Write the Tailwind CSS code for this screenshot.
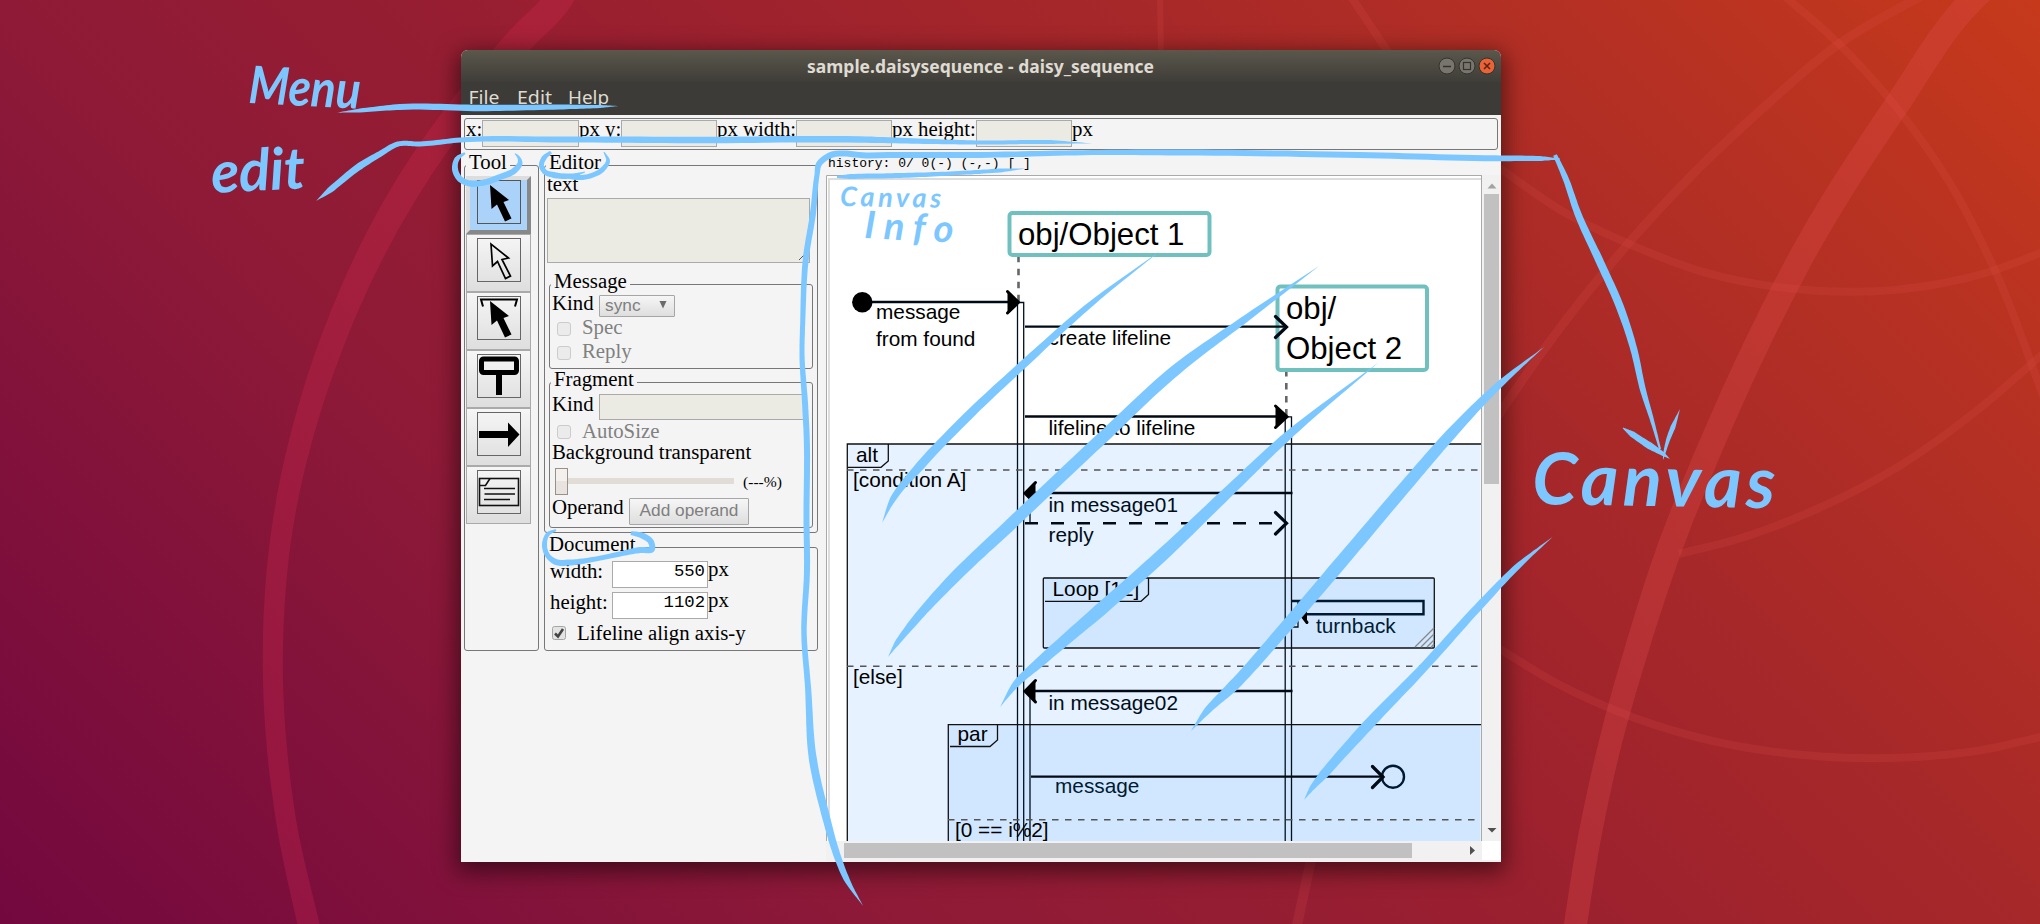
<!DOCTYPE html>
<html lang="en">
<head>
<meta charset="utf-8">
<title>sample.daisysequence - daisy_sequence</title>
<script src="https://cdn.jsdelivr.net/npm/@tailwindcss/browser@4"></script>
</head>
<body class="overflow-hidden">
<main class="relative h-[924px] w-[2040px] overflow-hidden bg-linear-[45deg,#73083f_0%,#8e1a37_31%,#991f30_50%,#a72829_69%,#b43024_83%,#c6391b_100%] font-['Liberation_Serif',serif] text-[20.8px] leading-[20px] text-black">
  <!-- wallpaper rings -->
  <svg id="rings" class="absolute inset-0" width="2040" height="924"></svg>

  <section class="absolute top-[50px] left-[461px] flex h-[812px] w-[1040px] flex-col overflow-hidden rounded-t-[7px] bg-[#f4f4f4] shadow-[0_6px_22px_4px_rgba(0,0,0,0.5)]">
    <header class="flex h-[32px] shrink-0 items-center bg-linear-to-b from-[#5b574c] to-[#3f3d38]">
      <svg class="block" width="1040" height="32">
        <text x="346" y="22.700" textLength="347" lengthAdjust="spacingAndGlyphs" font-family="Noto Sans, sans-serif" font-weight="700" font-size="17.5" fill="#dfdbd2">sample.daisysequence - daisy_sequence</text>
        <g stroke="#33322d">
          <circle cx="986" cy="16" r="8" fill="#77756d"/><path d="M982 16.5h8" stroke-width="1.3"/>
          <circle cx="1006" cy="16" r="8" fill="#77756d"/><rect x="1002.500" y="12.500" width="7" height="7" fill="none" stroke-width="1.200"/>
          <circle cx="1026" cy="16" r="8" fill="#ea6236"/><path d="M1023 13l6 6m0-6l-6 6" stroke-width="1.600" stroke="#5c2413"/>
        </g>
      </svg>
    </header>
    <nav class="h-[33px] shrink-0 bg-[#3c3b37]">
      <svg class="block" width="400" height="33" font-family="Noto Sans, sans-serif" font-size="18.500" fill="#dfdbd2">
        <text x="7.500" y="22.300" textLength="31" lengthAdjust="spacingAndGlyphs">File</text>
        <text x="56" y="22.300" textLength="35" lengthAdjust="spacingAndGlyphs">Edit</text>
        <text x="107" y="22.300" textLength="41" lengthAdjust="spacingAndGlyphs">Help</text>
      </svg>
    </nav>

    <div class="mx-[3px] mt-[3px] flex h-[32px] shrink-0 items-start rounded-[3px] border border-[#777] whitespace-nowrap">
      <span class="w-[17px] pl-px">x:</span><span class="mt-px h-[27px] w-[97px] border border-[#aaa] bg-[#ebebe4]"></span>
      <span class="w-[42px]">px y:</span><span class="mt-px h-[27px] w-[96px] border border-[#aaa] bg-[#ebebe4]"></span>
      <span class="w-[79px]">px width:</span><span class="mt-px h-[27px] w-[96px] border border-[#aaa] bg-[#ebebe4]"></span>
      <span class="w-[84px]">px height:</span><span class="mt-px h-[27px] w-[96px] border border-[#aaa] bg-[#ebebe4]"></span>
      <span>px</span>
    </div>

    <div class="flex h-[712px] shrink-0 items-start">
      <fieldset class="mt-[4px] ml-[3px] h-[497px] w-[75px] shrink-0 rounded-[3px] border border-[#777] pl-px">
        <legend class="h-[22px] px-[3px] leading-[15px]">Tool</legend>
        <div class="h-[58px] w-[65px] border-4 border-t-[#ddd] border-r-[#888] border-b-[#888] border-l-[#ddd] bg-[#abd2f9] pl-[7px]">
          <svg class="block" width="44" height="44"><rect x=".5" y=".5" width="43" height="43" fill="none" stroke="#555"/><path d="M13 5L14.500 29L20 24.500L28 41.500L34.500 38.500L26.500 22L32 20Z"/></svg>
        </div>
        <div class="h-[58px] w-[65px] border border-[#aaa] bg-linear-to-b from-[#f6f6f6] to-[#dedede] pt-[3px] pl-[10px]">
          <svg class="block" width="44" height="44"><rect x=".5" y=".5" width="43" height="43" fill="none" stroke="#666"/><path d="M14 6L15.500 28L20.500 23.500L28.500 40.500L33.500 38L25 21.500L31.500 20Z" fill="none" stroke="#000" stroke-width="1.700"/></svg>
        </div>
        <div class="h-[58px] w-[65px] border border-[#aaa] bg-linear-to-b from-[#f6f6f6] to-[#dedede] pt-[3px] pl-[10px]">
          <svg class="block" width="44" height="44"><rect x=".5" y=".5" width="43" height="43" fill="none" stroke="#666"/><path d="M13 5L14.500 29L20 24.500L28 41.500L34.500 38.500L26.500 22L32 20Z"/><path d="M6 10.500L4 3.500H40L38 10.500" fill="none" stroke="#000" stroke-width="2"/></svg>
        </div>
        <div class="h-[58px] w-[65px] border border-[#aaa] bg-linear-to-b from-[#f6f6f6] to-[#dedede] pt-[3px] pl-[10px]">
          <svg class="block" width="44" height="44"><rect x=".5" y=".5" width="43" height="43" fill="none" stroke="#666"/><rect x="4.500" y="5" width="35" height="13.500" rx="2" fill="none" stroke="#000" stroke-width="5"/><path d="M22 19V41" stroke="#000" stroke-width="6"/></svg>
        </div>
        <div class="h-[58px] w-[65px] border border-[#aaa] bg-linear-to-b from-[#f6f6f6] to-[#dedede] pt-[3px] pl-[10px]">
          <svg class="block" width="44" height="44"><rect x=".5" y=".5" width="43" height="43" fill="none" stroke="#666"/><path d="M2 19H31V10.500L42.500 22.500L31 35V26H2Z"/></svg>
        </div>
        <div class="h-[58px] w-[65px] border border-[#aaa] bg-linear-to-b from-[#f6f6f6] to-[#dedede] pt-[3px] pl-[10px]">
          <svg class="block" width="44" height="44" fill="none" stroke="#111" stroke-width="1.600"><rect x=".5" y=".5" width="43" height="43" stroke="#666" stroke-width="1"/><rect x="2.500" y="8.500" width="39" height="27"/><path d="M2.500 15.500H8.500L13 8.500M7 18.500H38M7.500 24H38M7 29.500H33"/></svg>
        </div>
      </fieldset>

      <div class="mt-[4px] ml-[5px] w-[274px] shrink-0">
        <fieldset class="h-[379px] rounded-[3px] border border-[#777] pl-px">
          <legend class="h-[22px] px-[3px] leading-[15px]">Editor</legend>
          <div class="-mt-[2px] h-[24px] pl-px">text</div>
          <div class="ml-px flex h-[65px] w-[263px] items-end justify-end border border-[#aaa] bg-[#ebebe4] pr-[3px] pb-[1px]">
            <svg width="8" height="8" stroke="#555"><path d="M1 7L7 1M5 7L7 5"/></svg>
          </div>
          <fieldset class="mt-[10px] ml-[3px] h-[96px] w-[264px] rounded-[3px] border border-[#777] pl-px">
            <legend class="h-[22px] px-[3px] leading-[15px]">Message</legend>
            <div class="flex h-[22px] items-start pl-px">
              <span class="-mt-[2px] w-[47px]">Kind</span>
              <span class="flex h-[22px] w-[76px] items-center justify-between rounded-[1px] border border-[#a6a6a6] bg-linear-to-b from-[#f6f6f6] to-[#dedede] pr-[7px] pb-[2px] pl-[5px] font-['Liberation_Sans',sans-serif] text-[17.3px] text-[#7f7f7f]"><span>sync</span><svg width="8" height="8" fill="#6b6b6b"><path d="M.5 0H7.500L4 7.500Z"/></svg></span>
            </div>
            <div class="flex h-[24px] items-start pl-[6px] text-[#808080]"><span class="mt-[5px] mr-[11px] h-[14px] w-[14px] rounded-[3px] border border-[#ccc] bg-[#ebebeb]"></span><span>Spec</span></div>
            <div class="flex h-[24px] items-start pl-[6px] text-[#808080]"><span class="mt-[5px] mr-[11px] h-[14px] w-[14px] rounded-[3px] border border-[#ccc] bg-[#ebebeb]"></span><span>Reply</span></div>
          </fieldset>
          <fieldset class="mt-[2px] ml-[3px] h-[157px] w-[264px] rounded-[3px] border border-[#777] pl-px">
            <legend class="h-[22px] px-[3px] leading-[15px]">Fragment</legend>
            <div class="flex h-[28px] items-start pl-px">
              <span class="mt-px w-[47px]">Kind</span><span class="mt-px h-[26px] w-[207px] border border-[#aaa] bg-[#ebebe4]"></span>
            </div>
            <div class="flex h-[21px] items-start pl-[6px] text-[#808080]"><span class="mt-[4px] mr-[11px] h-[14px] w-[14px] rounded-[3px] border border-[#ccc] bg-[#ebebeb]"></span><span>AutoSize</span></div>
            <div class="h-[24px] pl-px">Background transparent</div>
            <div class="flex h-[31px] items-start pl-[4px]">
              <span class="mt-[2px] h-[27px] w-[13px] border border-[#999089] bg-linear-to-b from-[#f3f0ed] from-50% to-[#e9e3df] to-50%"></span><span class="mt-[12px] h-[6px] w-[166px] bg-[#e1dcd6]"></span><span class="mt-[6px] ml-[9px] text-[15.6px]">(---%)</span>
            </div>
            <div class="flex items-start pl-px"><span class="w-[77px]">Operand</span><span class="mt-px h-[27px] w-[120px] rounded-[1px] border border-[#a6a6a6] bg-linear-to-b from-[#f6f6f6] to-[#dedede] pt-px text-center font-['Liberation_Sans',sans-serif] text-[17.3px] text-[#7f7f7f]">Add operand</span></div>
          </fieldset>
        </fieldset>
        <fieldset class="mt-[3px] h-[115px] rounded-[3px] border border-[#777] pl-px">
          <legend class="h-[22px] px-[3px] leading-[15px]">Document</legend>
          <div class="mt-[3px] flex h-[31px] items-start pl-[4px]"><span class="w-[62px]">width:</span><span class="h-[27px] w-[96px] border border-[#aaa] bg-white pr-[2px] text-right font-['Liberation_Mono',monospace] text-[17.3px]">550</span><span class="-mt-[2px]">px</span></div>
          <div class="flex h-[31px] items-start pl-[4px]"><span class="w-[62px]">height:</span><span class="h-[27px] w-[96px] border border-[#aaa] bg-white pr-[2px] text-right font-['Liberation_Mono',monospace] text-[17.3px]">1102</span><span class="-mt-[2px]">px</span></div>
          <div class="flex items-start pl-[6px]">
            <svg class="mt-[3px] mr-[11px]" width="14" height="14"><rect x=".5" y=".5" width="13" height="13" rx="2" fill="#e3e3e3" stroke="#a5a5a5"/><path d="M3 7.500L6 10.500L11 3" fill="none" stroke="#444" stroke-width="2.600"/></svg>
            <span>Lifeline align axis-y</span>
          </div>
        </fieldset>
      </div>

      <div class="ml-[8px] flex h-[712px] w-[675px] shrink-0 flex-col">
        <div class="h-[25px] shrink-0 pt-[4px] pl-[2px] font-['Liberation_Mono',monospace] text-[13px] whitespace-pre">history: 0/ 0(-) (-,-) [ ]</div>
        <div class="flex h-[666px] shrink-0">
          <svg class="block shrink-0" width="656" height="666" viewBox="826 175 656 666" font-family="Liberation Sans, sans-serif" font-size="20.800">
            <rect x="826" y="175" width="656" height="666" fill="#fff"/>
            <path d="M826.500 841V175.500H1482M1481.500 175V841" fill="none" stroke="#aaa"/>
            <path d="M829 841V179H1481" fill="none" stroke="#ddd" stroke-width="2"/>
            <!-- fragment fills -->
            <rect x="847.500" y="444" width="633" height="420" fill="#e6f2ff"/>
            <rect x="1043" y="578" width="391.500" height="70" fill="#d1e7ff"/>
            <rect x="948.500" y="725" width="532" height="130" fill="#d1e7ff"/>
            <!-- lifelines -->
            <g fill="none" stroke="#666" stroke-width="2.600" stroke-dasharray="6.500 6.500"><path d="M1018.500 255.700V302M1286.300 370V416"/></g>
            <g fill="#fff" stroke="#6fc0be" stroke-width="4"><rect x="1009.500" y="213" width="200" height="42" rx="3"/><rect x="1277.500" y="286.500" width="149.500" height="83.500" rx="3"/></g>
            <g font-size="31.200"><text x="1018" y="244.700">obj/Object 1</text><text x="1286" y="318.700">obj/</text><text x="1286" y="358.700">Object 2</text></g>
            <rect x="1018" y="303" width="6" height="141" fill="#fff"/><rect x="1285.500" y="417" width="6" height="27" fill="#fff"/>
            <g fill="none" stroke="#001020" stroke-width="1.300">
              <path d="M1017.500 860V302.500H1023.700V860M1285.200 860V416.800H1291.500V860M1030 493V523M1030 691V860M1298 601V627H1291.500"/>
            </g>
            <!-- fragment frames -->
            <g fill="none" stroke="#111" stroke-width="1.300">
              <path d="M1481 444H847.300V841M848 467.300H881L888.300 461V444"/>
              <rect x="1043.300" y="578" width="391" height="70" rx="1"/><path d="M1045 601.300H1141L1148.500 594.500V578"/>
              <path d="M1481 724.700H948.300V841M950 746.500H990L997.500 740V725"/>
            </g>
            <g stroke="#555" stroke-width="1.500" stroke-dasharray="6.500 6.500"><path d="M847 470H1481M847 666.200H1481M948 819.700H1481"/></g>
            <path d="M1415 647L1434 628M1421 647L1434 634M1427 647L1434 640M1431 647.500L1434 644" stroke="#888" stroke-width="1.300"/>
            <!-- messages -->
            <g fill="none" stroke="#000a14" stroke-width="2.300">
              <path d="M862 302H1018M1025 326.700H1287M1025 416.500H1284M1026 493H1292.500M1026 691H1292.500M1031 776.700H1384"/>
              <path d="M1025 523.200H1276" stroke-width="2.400" stroke-dasharray="13 13"/>
              <path d="M1291 601H1423.500V614.300H1302" stroke="#001a33" stroke-width="2.400"/>
              <circle cx="1393" cy="776.700" r="11" stroke="#001a33" stroke-width="2.400"/>
            </g>
            <circle cx="862.300" cy="302.300" r="10.200"/>
            <g fill="#000" stroke="#000" stroke-width="3" stroke-linecap="round">
              <path d="M1007.500 291.500L1018.500 302.300L1007.500 313"/>
              <path d="M1275.500 406L1287 416.700L1275.500 427.500"/>
              <path d="M1035.500 482.500L1025 493.200L1035.500 504"/>
              <path d="M1035.500 680.500L1025 691.200L1035.500 702"/>
              <path d="M1307 608L1302 616L1307 622.500"/>
            </g>
            <g fill="none" stroke="#000a14" stroke-width="3.200" stroke-linecap="round">
              <path d="M1275.500 316.500L1286.500 327L1275.500 337.500M1275.500 512.500L1286.500 523.200L1275.500 534M1372.500 766.500L1383 777L1372.500 787.500"/>
            </g>
            <g>
              <text x="876" y="318.700">message</text><text x="876" y="345.700">from found</text>
              <text x="1048.500" y="344.700">create lifeline</text><text x="1048.500" y="434.700">lifeline to lifeline</text>
              <text x="856" y="462">alt</text><text x="853" y="487">[condition A]</text>
              <text x="1048.500" y="511.700" fill="#000d1a">in message01</text><text x="1048.500" y="541.700" fill="#000d1a">reply</text>
              <text x="1052.500" y="595.700">Loop [12]</text><text x="1316" y="632.700" fill="#001a33">turnback</text>
              <text x="853" y="683.700">[else]</text><text x="1048.500" y="709.700" fill="#000d1a">in message02</text>
              <text x="957.500" y="740.700">par</text><text x="1055" y="792.700" fill="#001a33">message</text>
              <text x="955" y="836.700">[0 == i%2]</text>
            </g>
          </svg>
          <div class="flex w-[19px] flex-col items-center bg-[#f1f1f1]">
            <svg class="h-[19px] w-[10px] shrink-0"><path d="M.5 13.500L5 8.500L9.500 13.500Z" fill="#a3a3a3"/></svg>
            <div class="h-[290px] w-[15px] shrink-0 bg-[#c1c1c1]"></div>
            <svg class="mt-auto mb-[5px] shrink-0" width="10" height="10"><path d="M.5 2L5 6.500L9.500 2Z" fill="#505050"/></svg>
          </div>
        </div>
        <div class="flex h-[21px] shrink-0 items-start bg-[#f1f1f1]">
          <div class="mt-[2px] ml-[18px] h-[15px] w-[568px] bg-[#c1c1c1]"></div>
          <svg class="mt-[4px] ml-[58px]" width="6" height="11"><path d="M0 1L5 5.500L0 10Z" fill="#505050"/></svg>
          <div class="ml-auto h-[19px] w-[19px] bg-white"></div>
        </div>
      </div>
    </div>
  </section>

  <!-- pen annotations -->
  <svg class="absolute inset-0" width="2040" height="924" fill="#7cc7ff">
    <g id="pen"></g>
    <g font-family="Lato, sans-serif" font-weight="700" font-style="italic">
      <text transform="translate(248 103) rotate(3)" textLength="112" lengthAdjust="spacingAndGlyphs" font-size="52">Menu</text>
      <text transform="translate(212 193) rotate(-3)" textLength="94" font-size="58">edit</text>
      <text transform="translate(1532 504) rotate(1)" textLength="243" font-size="72">Canvas</text>
      <text transform="translate(840 206) rotate(1)" textLength="101" font-size="27">Canvas</text>
      <text transform="translate(864 238) rotate(3)" textLength="89" font-size="38">Info</text>
    </g>
  </svg>
</main>
<script>
// Draws a variable-width stroke through [x, y, width] points, smoothed as a
// curve whose tangents are weighted by the distance between the points.
function stroke(points, parent, fill) {
  const n = points.length, s = [], h = [];
  for (let i = 0; i < n - 1; i++) h.push(Math.hypot(points[i + 1][0] - points[i][0], points[i + 1][1] - points[i][1]));
  const slope = (i, c) => (points[i + 1][c] - points[i][c]) / h[i];
  const tangent = (i, c) => i === 0 ? slope(0, c) : i === n - 1 ? slope(n - 2, c) : (slope(i - 1, c) * h[i] + slope(i, c) * h[i - 1]) / (h[i] + h[i - 1]);
  for (let i = 0; i < n - 1; i++)
    for (let k = 0; k < 12; k++) {
      const t = k / 12, t2 = t * t, t3 = t2 * t;
      const q = [0, 1].map(c => (2 * t3 - 3 * t2 + 1) * points[i][c] + (t3 - 2 * t2 + t) * h[i] * tangent(i, c) + (3 * t2 - 2 * t3) * points[i + 1][c] + (t3 - t2) * h[i] * tangent(i + 1, c));
      q.push(points[i][2] + (points[i + 1][2] - points[i][2]) * t);
      s.push(q);
    }
  s.push(points[n - 1]);
  const a = [], b = [];
  s.forEach((q, i) => {
    const u = s[Math.max(i - 1, 0)], v = s[Math.min(i + 1, s.length - 1)];
    const dx = v[0] - u[0], dy = v[1] - u[1], l = Math.hypot(dx, dy) || 1, w = q[2] / 2;
    a.push([q[0] - dy / l * w, q[1] + dx / l * w]);
    b.unshift([q[0] + dy / l * w, q[1] - dx / l * w]);
  });
  const e = document.createElementNS('http://www.w3.org/2000/svg', 'path');
  e.setAttribute('d', 'M' + a.concat(b).map(q => q[0].toFixed(1) + ' ' + q[1].toFixed(1)).join('L') + 'Z');
  if (fill) e.setAttribute('fill', fill);
  parent.appendChild(e);
}
const rings = document.getElementById('rings');
stroke([[577,-35,28],[558,0,28],[520,40,28],[394,210,27],[322,370,24],[282,530,21],[273,680,20],[286,820,20],[312,940,22]], rings, 'rgba(225,45,85,.25)');
stroke([[2008,-32,25],[1972,0,25],[1896,106,25],[1813,236,25],[1755,348,25],[1710,448,25],[1669,550,25],[1638,645,24],[1611,740,23],[1590,835,23],[1573,940,23]], rings, 'rgba(225,75,75,.3)');
[[[1930,-9,9],[1839,44,9],[1762,109,9],[1693,174,9],[1627,245,9],[1545,348,9],[1495,420,9]],
 [[1495,165,8],[1569,215,8],[1627,243,8],[1707,273,8],[1796,289,8],[1879,291,8],[1992,271,8],[2045,251,8]],
 [[1775,-12,8],[1839,44,8],[1900,112,8],[1948,180,8],[1992,264,8],[2045,400,8]],
 [[1490,643,8],[1562,686,8],[1627,715,8],[1713,741,8],[1803,755,8],[1889,758,8],[1982,750,8],[2045,736,8]],
 [[1679,554,8],[1741,538,8],[1810,512,8],[1896,468,8],[1975,412,8],[2045,352,8]],
 [[1160,-5,6],[1161,60,6]], [[1350,-5,8],[1390,55,8]], [[1296,930,10],[1312,855,10]]
].forEach(q => stroke(q, rings, 'rgba(225,85,75,.17)'));
const pen = document.getElementById('pen');
[
 [[337,112.700,0],[360,110.500,4],[400,107,6],[480,108,6.500],[560,107,5],[600,106.500,3],[618.500,106,0]],
 [[316,201,0],[330,190,6],[360,166,7],[380,154,6],[398,144,5],[420,144,5],[460,140,5],[560,139.500,6],[700,140,6.500],[860,139.500,6.500],[930,141.500,5],[980,142.500,4],[1050,142,4],[1093,143.500,0]],
 [[465,153,2],[457,159,5],[455,169,6],[460,179,6],[470,183.500,6],[484,182.500,6],[500,177,6],[515,170,6],[520,163,5],[519,158,3],[515,153.500,1]],
 [[551,152,3],[544,158,5],[541.500,166,5],[545,172,5],[554,175,6],[570,176,5],[585,172,1]],
 [[562,175,3],[575,177.500,5],[590,176,5],[603,169,5],[608,161,4],[604,152,1]],
 [[556,530,2],[548,534,4],[544.500,544,5],[548,556,5],[556,562,6],[570,562.500,6],[590,560,5],[620,554,5],[640,550,6],[652,549,6],[651,542,6],[643,536,6],[631,533,4]],
 [[837,177,2],[850,176.500,5],[900,175.500,5],[950,173.500,4],[1000,170.500,4],[1026,168.500,0]],
 [[863,906,0],[846,878,6],[838,858,7],[825,813,8],[813,760,8],[808,687,6],[804,633,5.500],[807,570,6],[806.500,520,6],[806.700,437,6],[805,403,6],[802,353,5],[802.700,323,5],[806,257,6],[813,213,6],[817,175,5],[819,164,6],[826,157.500,6],[870,155.500,6],[980,155,6],[1083,152.700,5],[1186,152.500,6],[1359,155,6],[1496,158.300,6],[1540,158.500,5],[1560,159,1]],
 [[1555,155,4],[1565,177,6],[1578,214,7],[1600,262,8],[1620,307,8],[1634,350,7],[1643,390,6],[1652,420,4],[1660,449,2]],
 [[1623,428,1],[1632,434,6],[1650,446,7],[1663,454,4],[1670,459,0]],
 [[1680,409,0],[1673,427,5],[1668,440,4],[1664,455,2],[1663,460,0]],
 [[1160,251,0],[1086,308,6],[1027,361,8],[967,417,9],[920,466,9],[893,499,6],[882,523,0]],
 [[1319,266,0],[1248,317,7],[1177,369,11],[1100,440,12],[1011,524,12],[950,582,11],[912,624,8],[897,643,5],[888,657,0]],
 [[1379,362,0],[1283,440,9],[1227,493,11],[1160,557,13],[1100,610,13],[1040,662,10],[1016,684,7],[1000,707,0]],
 [[1544,347,0],[1500,384,7],[1450,435,11],[1410,481,12],[1337,567,13],[1283,630,12],[1233,686,11],[1207,711,7],[1191,731,0]],
 [[1552.500,537,0],[1517,567,6],[1483,602,8],[1423,668,9],[1367,726,11],[1324,774,9],[1312,788,5],[1304,800,0]]
].forEach(q => stroke(q, pen));
</script>
</body>
</html>
